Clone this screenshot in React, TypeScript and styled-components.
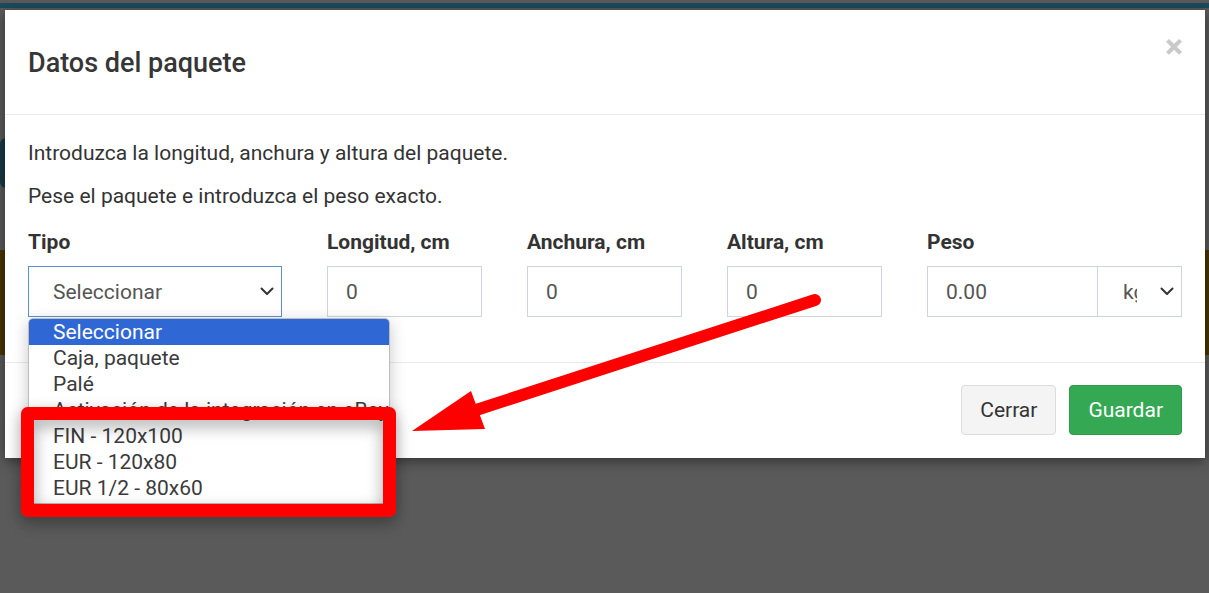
import React from "react";
import styled, { createGlobalStyle } from "styled-components";

const GlobalStyle = createGlobalStyle`
  html, body {
    margin: 0;
    padding: 0;
    height: 100%;
    overflow: hidden;
  }
  body {
    background: #5a5a5a;
    font-family: Roboto, "Liberation Sans", Arial, sans-serif;
  }
`;

// page that sits behind the backdrop (already dimmed colours)
const Page = styled.div`
  position: relative;
  width: 1209px;
  height: 593px;
  display: flex;
  flex-direction: column;
`;

const TopStrip = styled.div`
  margin-top: 3px;
  height: 5px;
  background: #1d4a5e;
`;

const PageButton = styled.div`
  margin-top: 130px;
  width: 120px;
  height: 50px;
  border-radius: 6px;
  background: #1a3747;
`;

const Banner = styled.div`
  margin-top: 62px;
  height: 105px;
  background: #4a3400;
`;

const Modal = styled.div`
  position: absolute;
  top: 10px;
  left: 5px;
  width: 1200px;
  background: #fff;
  box-shadow: 0 3px 12px rgba(0, 0, 0, 0.45);
  color: #333;
`;

const Header = styled.div`
  position: relative;
  padding: 36px 23px 34px;
  border-bottom: 1px solid #e9e9e9;
`;

const Title = styled.h4`
  margin: 0;
  font-size: 27px;
  line-height: 34px;
  font-weight: 500;
  color: #363636;
`;

const CloseButton = styled.button`
  position: absolute;
  top: 19px;
  right: 22px;
  padding: 0;
  border: none;
  background: none;
  font-family: inherit;
  font-size: 34px;
  line-height: 1;
  font-weight: 700;
  color: #c9c9c9;
  cursor: pointer;
`;

const Body = styled.div`
  padding: 23px 23px 45px;
`;

const Paragraph = styled.p`
  margin: 0 0 13px;
  font-size: 21px;
  line-height: 30px;
  color: #333;
`;

const FieldRow = styled.div`
  display: grid;
  grid-template-columns: 254px 155px 155px 155px 255px;
  column-gap: 45px;
  margin-top: 16px;
`;

const Field = styled.div`
  position: relative;
  display: flex;
  flex-direction: column;
`;

const Label = styled.label`
  font-size: 21px;
  line-height: 30px;
  font-weight: 700;
  color: #333;
  margin-bottom: 9px;
`;

const Box = styled.div<{ $focus?: boolean }>`
  box-sizing: border-box;
  height: 51px;
  display: flex;
  align-items: center;
  border: 1px solid ${(p) => (p.$focus ? "#5a93c9" : "#cfd4de")};
  background: #fff;
  font-size: 21px;
  color: #555;
`;

const InputBox = styled(Box)`
  padding: 0 18px;
  flex: 1;
`;

const SelectBox = styled(Box)`
  padding: 0 7px 0 24px;
  justify-content: space-between;
`;

const InputGroup = styled.div`
  display: flex;
`;

const UnitSelect = styled(Box)`
  width: 85px;
  margin-left: -1px;
  padding: 0 7px 0 25px;
  justify-content: space-between;
`;

const Clip = styled.span`
  display: inline-block;
  width: 14px;
  overflow: hidden;
  white-space: nowrap;
`;

const OptionList = styled.ul`
  position: absolute;
  top: 100%;
  left: 0;
  width: 362px;
  margin: 1px 0 0;
  padding: 0 0 2px;
  list-style: none;
  box-sizing: border-box;
  background: #fff;
  border: 1px solid #bdbdbd;
  border-radius: 5px;
  box-shadow: 0 4px 16px rgba(0, 0, 0, 0.22);
  overflow: hidden;
  z-index: 2;
`;

const Option = styled.li<{ $active?: boolean }>`
  height: 26px;
  line-height: 26px;
  padding-left: 24px;
  font-size: 21px;
  white-space: nowrap;
  overflow: hidden;
  background: ${(p) => (p.$active ? "#2f68d5" : "transparent")};
  color: ${(p) => (p.$active ? "#fff" : "#3b3b3b")};
`;

const Footer = styled.div`
  display: flex;
  justify-content: flex-end;
  gap: 13px;
  padding: 22px 23px 23px;
  border-top: 1px solid #e9e9e9;
`;

const Button = styled.button<{ $primary?: boolean }>`
  height: 50px;
  padding: 0 18px;
  border-radius: 4px;
  font-family: inherit;
  font-size: 21px;
  border: 1px solid ${(p) => (p.$primary ? "#2e9a4d" : "#dcdcdc")};
  background: ${(p) => (p.$primary ? "#34a853" : "#f4f4f4")};
  color: ${(p) => (p.$primary ? "#fff" : "#333")};
  cursor: pointer;
`;

const Annotation = styled.svg`
  position: absolute;
  top: 0;
  left: 0;
  width: 1209px;
  height: 593px;
  pointer-events: none;
  z-index: 5;
`;

const Chevron: React.FC = () => (
  <svg width="14" height="9" viewBox="0 0 14 9" fill="none">
    <path d="M1.5 1.5 7 7l5.5-5.5" stroke="#333" strokeWidth="2" strokeLinecap="round" strokeLinejoin="round" />
  </svg>
);

const options: string[] = [
  "Seleccionar",
  "Caja, paquete",
  "Palé",
  "Activación de la integración en eBay",
  "FIN - 120x100",
  "EUR - 120x80",
  "EUR 1/2 - 80x60",
];

const sizeFields: { label: string; value: string }[] = [
  { label: "Longitud, cm", value: "0" },
  { label: "Anchura, cm", value: "0" },
  { label: "Altura, cm", value: "0" },
];

export default function App(): JSX.Element {
  return (
    <>
      <GlobalStyle />
      <Page>
        <TopStrip />
        <PageButton />
        <Banner />

        <Modal>
          <Header>
            <Title>Datos del paquete</Title>
            <CloseButton type="button">×</CloseButton>
          </Header>

          <Body>
            <Paragraph>Introduzca la longitud, anchura y altura del paquete.</Paragraph>
            <Paragraph>Pese el paquete e introduzca el peso exacto.</Paragraph>

            <FieldRow>
              <Field>
                <Label>Tipo</Label>
                <SelectBox $focus>
                  <span>Seleccionar</span>
                  <Chevron />
                </SelectBox>
                <OptionList>
                  {options.map((o, i) => (
                    <Option key={o} $active={i === 0}>
                      {o}
                    </Option>
                  ))}
                </OptionList>
              </Field>

              {sizeFields.map((f) => (
                <Field key={f.label}>
                  <Label>{f.label}</Label>
                  <InputBox>{f.value}</InputBox>
                </Field>
              ))}

              <Field>
                <Label>Peso</Label>
                <InputGroup>
                  <InputBox>0.00</InputBox>
                  <UnitSelect>
                    <Clip>kg</Clip>
                    <Chevron />
                  </UnitSelect>
                </InputGroup>
              </Field>
            </FieldRow>
          </Body>

          <Footer>
            <Button type="button">Cerrar</Button>
            <Button type="button" $primary>
              Guardar
            </Button>
          </Footer>
        </Modal>

        <Annotation viewBox="0 0 1209 593">
          <defs>
            <filter id="boxShadow" x="-20%" y="-30%" width="140%" height="180%">
              <feDropShadow dx="0" dy="6" stdDeviation="8" floodColor="#000" floodOpacity="0.35" />
            </filter>
          </defs>
          <rect
            x="27.5"
            y="413.5"
            width="362"
            height="97"
            fill="none"
            stroke="#ff0000"
            strokeWidth="13"
            strokeLinejoin="round"
            filter="url(#boxShadow)"
          />
          <line x1="815" y1="300" x2="470" y2="412" stroke="#ff0000" strokeWidth="12" strokeLinecap="round" />
          <polygon points="412,431 471,391 485,429" fill="#ff0000" />
        </Annotation>
      </Page>
    </>
  );
}
